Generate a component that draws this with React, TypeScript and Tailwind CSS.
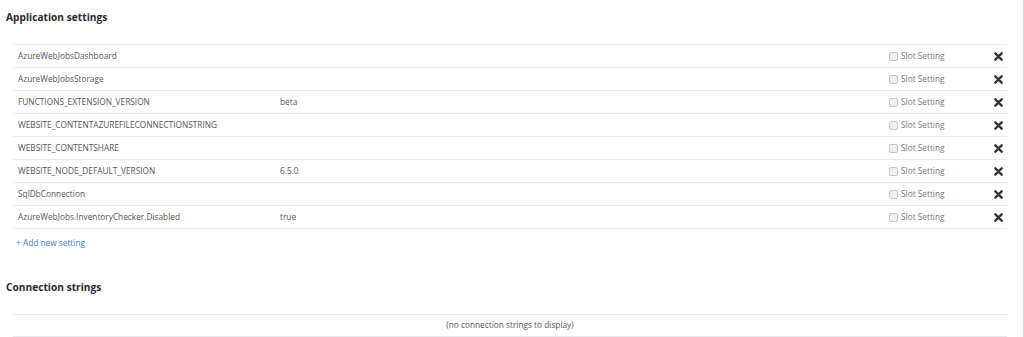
import React from 'react';

const settings = [
  { name: 'AzureWebJobsDashboard', value: '' },
  { name: 'AzureWebJobsStorage', value: '' },
  { name: 'FUNCTIONS_EXTENSION_VERSION', value: 'beta' },
  { name: 'WEBSITE_CONTENTAZUREFILECONNECTIONSTRING', value: '' },
  { name: 'WEBSITE_CONTENTSHARE', value: '' },
  { name: 'WEBSITE_NODE_DEFAULT_VERSION', value: '6.5.0' },
  { name: 'SqlDbConnection', value: '' },
  { name: 'AzureWebJobs.InventoryChecker.Disabled', value: 'true' },
];

const CloseIcon = () => (
  <svg width="9" height="9" viewBox="0 0 10 10">
    <path d="M1.5 1.5 L8.5 8.5 M8.5 1.5 L1.5 8.5" stroke="#333" strokeWidth="2.6" strokeLinecap="round" />
  </svg>
);

export default function App() {
  return (
    <div className="w-[1024px] h-[337px] overflow-hidden bg-white border-r border-[#dcdcdc] font-['Open_Sans',sans-serif]">
      <div className="w-[1023px]">
        <h2 className="pl-[6px] pt-[9px] h-[44px] text-[10.2px] font-bold text-[#2b2b2b] leading-[16px]">
          Application settings
        </h2>

        <div className="mx-[13px] w-[994px] border-t border-[#e6eaed]">
          {settings.map((s) => (
            <div key={s.name} className="flex items-center h-[23px] border-b border-[#e6eaed] text-[8.3px] text-[#555]">
              <div className="w-[267px] pl-[5px]">{s.name}</div>
              <div className="flex-1">{s.value}</div>
              <label className="flex items-center gap-[3px] w-[100px] text-[#777]">
                <span className="w-[9px] h-[9px] border border-[#c4c4c4] rounded-[2px] bg-[#f0f0f0]" />
                Slot Setting
              </label>
              <div className="w-[18px] pl-[5px] flex items-center">
                <CloseIcon />
              </div>
            </div>
          ))}
        </div>

        <div className="pl-[16px] pt-[8px] h-[50px] text-[8.3px] text-[#3c7bcb]">+ Add new setting</div>

        <h2 className="pl-[6px] h-[35px] text-[10.2px] font-bold text-[#2b2b2b] leading-[16px]">
          Connection strings
        </h2>

        <div className="mx-[13px] w-[994px] border-t border-b border-[#e6eaed] h-[23px] flex items-center justify-center text-[8.3px] text-[#555]">
          (no connection strings to display)
        </div>
      </div>
    </div>
  );
}
